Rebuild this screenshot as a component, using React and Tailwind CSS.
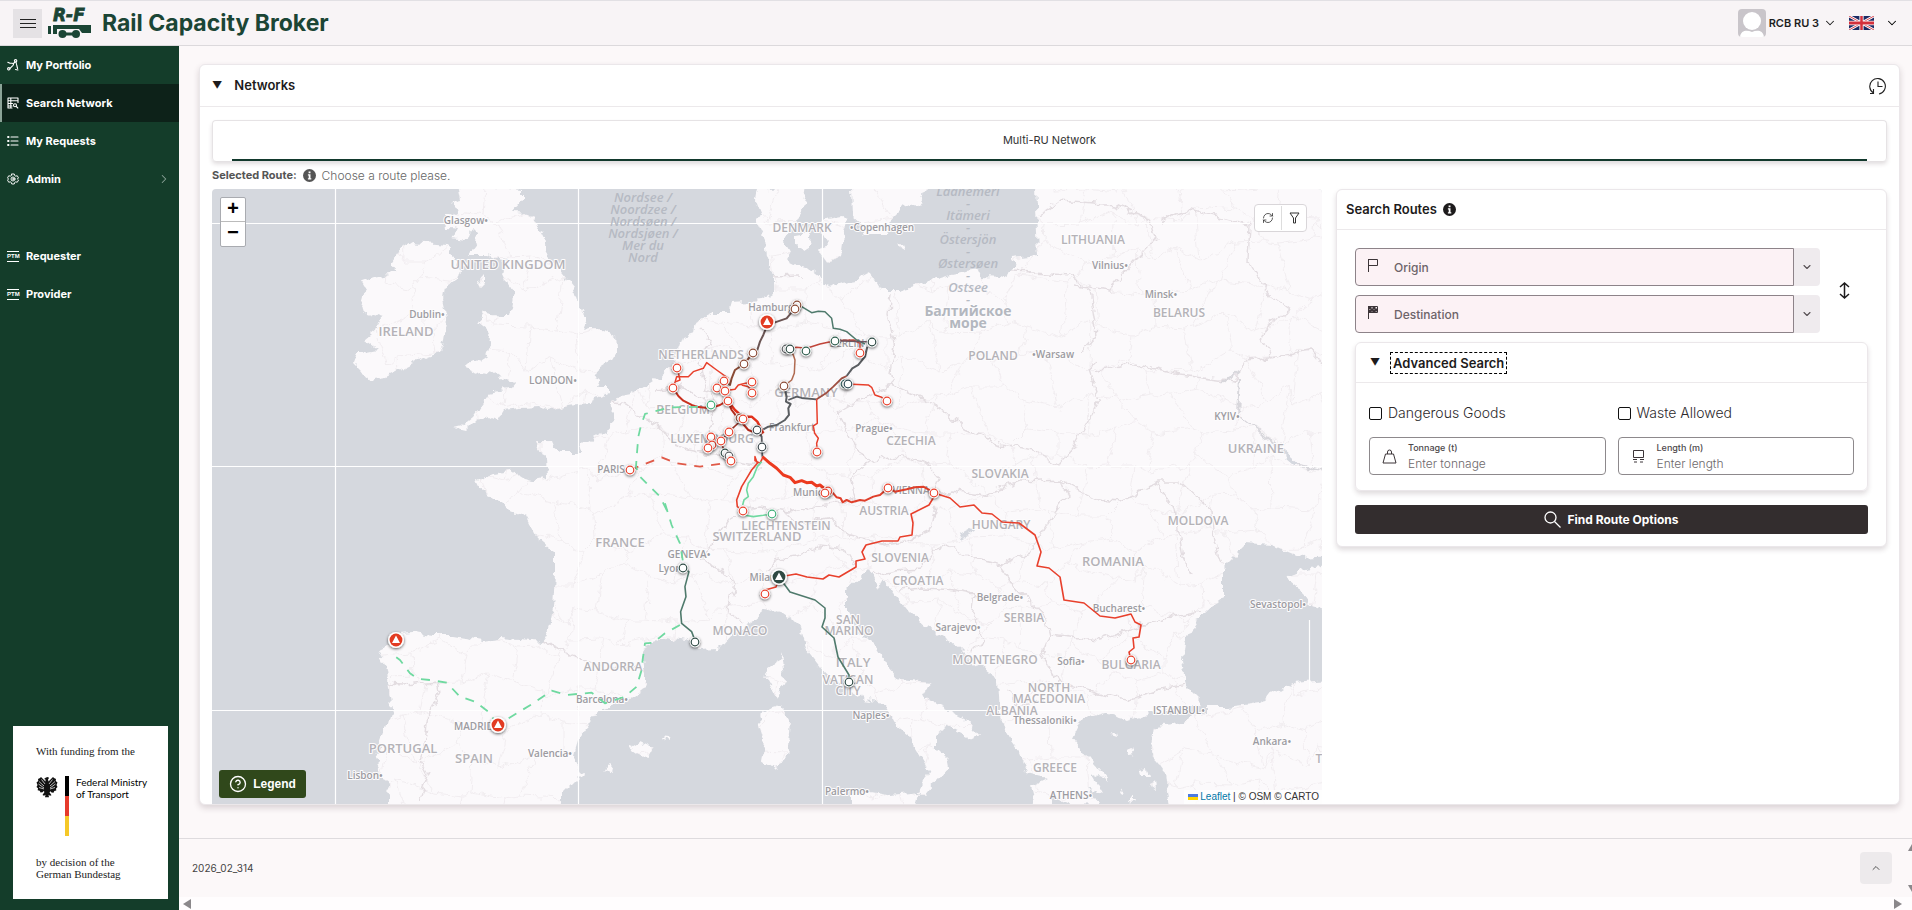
import React, { useState } from 'react';
import { ChevronDown, ChevronRight, ChevronUp, RefreshCw, CircleHelp } from 'lucide-react';

const LAND = [
  // Continental Europe
  'M757 189 755 200 760 213 757 223 765 240 767 257 773 273 773 293 763 300 733 302 730 313 712 313 697 320 695 333 683 337 675 360 660 377 653 380 630 395 620 397 613 400 612 427 587 440 580 447 582 453 560 453 552 447 550 442 538 442 547 460 548 477 533 480 523 478 510 470 493 473 477 480 483 493 500 502 507 510 527 518 537 537 555 552 555 573 553 607 548 633 543 642 520 640 500 638 483 640 453 635 433 635 413 632 397 633 392 643 378 650 385 663 388 687 392 710 387 727 375 760 383 777 390 793 390 810 562 810 562 793 582 773 573 757 578 740 590 722 600 710 625 702 645 687 645 673 642 653 648 643 667 637 687 640 700 648 720 647 733 633 753 620 767 608 783 613 797 623 805 647 817 663 825 673 843 687 864 700 884 703 896 727 909 737 921 757 929 770 925 780 917 795 925 795 937 780 949 767 947 757 937 747 937 735 949 727 974 740 980 737 966 720 941 707 921 697 929 683 900 680 888 667 876 647 856 627 847 610 847 590 868 570 878 590 884 580 892 592 909 613 925 627 958 647 974 663 998 680 1000 713 1007 737 1019 753 1027 773 1047 778 1030 786 1036 810 1050 810 1050 795 1070 805 1100 804 1088 787 1104 794 1092 773 1108 780 1088 757 1072 737 1080 720 1104 713 1129 720 1149 713 1170 710 1202 703 1186 687 1182 660 1184 643 1202 613 1223 597 1223 567 1247 543 1272 545 1304 558 1330 556 1330 185 1035 185 1038 255 1012 258 1018 266 1000 278 983 277 980 270 967 272 943 277 900 290 880 290 870 273 857 280 840 283 827 287 820 277 807 267 793 263 787 250 783 243 790 230 797 220 803 210 807 185Z',
  // Great Britain
  'M460 185 523 189 523 200 513 212 528 213 538 223 545 237 547 252 557 267 565 277 573 287 577 300 580 307 587 320 583 330 590 328 603 328 615 337 616 350 608 363 597 370 593 377 600 380 597 387 608 387 608 393 590 403 567 405 550 410 537 407 520 408 503 410 497 420 487 415 477 420 467 430 455 427 463 425 473 417 487 397 490 392 513 387 517 382 503 380 493 373 480 370 470 373 465 365 477 360 488 353 492 340 487 330 478 323 483 313 500 315 510 315 513 303 515 293 507 283 502 273 505 260 495 258 487 255 468 255 477 243 478 233 472 227 467 240 453 238 458 228 448 227 447 217 460 210 450 203 463 200Z',
  // Ireland
  'M413 242 447 245 452 255 460 270 457 280 445 288 443 300 448 323 445 340 440 353 427 357 407 367 387 377 368 380 360 370 353 363 357 353 363 353 377 350 363 340 377 328 382 318 367 313 360 308 363 297 367 290 362 282 373 278 400 273 390 262 397 252Z',
  // Zealand, Funen, Sweden, Bornholm
  'M822 220 840 217 848 220 843 237 840 257 827 263 820 253 827 243 820 230Z',
  'M797 236 808 234 812 245 804 250 797 246Z',
  'M852 185 853 217 860 223 863 235 887 235 890 220 903 207 920 203 930 185Z',
  'M897 243 905 247 904 252 899 249Z',
  // Corsica, Sardinia, Sicily
  'M782 650 785 680 776 698 766 680 768 667 780 660Z',
  'M762 713 782 707 790 720 788 747 786 763 772 768 760 760 764 740 757 717Z',
  'M849 795 864 790 890 795 921 792 916 810 849 810Z',
  // Balearics
  'M630 748 640 742 653 748 643 757Z',
  'M661 737 670 738 671 741 662 739Z',
  'M604 768 612 764 610 772Z',
  'M477 283 484 274 484 282 479 287Z',
  // Crimea
  'M1284 577 1300 570 1330 564 1330 612 1312 606 1304 593Z',
  // Turkey
  'M1207 707 1227 707 1260 703 1292 683 1330 680 1330 810 1170 810 1166 773 1149 753 1153 727 1178 723 1207 713Z',
  // Aegean islands
  'M1124 750 1132 748 1134 754 1126 755ZM1140 770 1146 768 1148 775 1141 775ZM1116 790 1121 788 1122 793ZM1128 798 1134 796 1134 801ZM1110 734 1115 732 1116 736ZM1150 785 1155 783 1156 789Z',
].join('');

const BORDERS = [
  // Iberia and France
  'M388 684 405 685 438 682 440 692 430 710 428 735 420 760 428 775 418 800',
  'M543 642 570 655 590 662 610 666 642 668',
  'M613 400 625 403 645 418 660 425 672 443 690 450 715 455 735 462 762 466',
  'M743 511 728 520 712 545 700 560 722 570 735 585 728 610 742 622',
  // Benelux and Germany
  'M700 328 712 345 700 362 705 385 715 400 712 425 704 445',
  'M653 390 680 388 705 398',
  'M773 277 800 276',
  'M890 292 888 315 895 345 890 372 893 385 865 396 838 412 852 440 868 462 850 475 855 500 820 505 790 512 760 508 745 510',
  'M893 385 925 400 945 412 965 430',
  // Alps and the Balkans
  'M786 512 800 525 830 518 850 535 885 545 905 542 930 530 935 505',
  'M868 462 900 456 925 462 940 478 934 493',
  'M768 572 775 560 800 556 820 545 845 548 855 565',
  'M872 575 895 570 920 568 935 550 948 545',
  'M948 545 975 560 1000 566 1030 552 1050 520 1068 495 1062 480 1020 482 985 495 950 490 938 495',
  'M900 590 925 588 955 590 975 594 972 615 985 640 970 655',
  'M1000 566 1018 590 1045 615 1050 635 1100 640 1150 622 1200 612',
  'M1050 635 1042 655 1058 680 1045 700 1020 705 1005 690',
  'M1058 680 1090 690 1130 700 1160 690 1185 685',
  // Poland to Ukraine
  'M965 430 1000 445 1035 450 1060 465 1072 450 1100 400 1090 370 1095 360',
  'M1080 353 1097 335 1090 290 1070 275 1010 272',
  'M1040 215 1060 200 1115 205 1150 220 1155 240 1135 260 1110 290 1075 285',
  'M1160 222 1190 210 1250 225 1248 260 1270 295 1290 310 1270 322 1262 340 1272 358 1310 350 1322 365',
  'M1095 373 1130 363 1180 375 1235 382 1245 360 1270 358',
  'M1062 480 1100 500 1120 502 1160 482 1180 482 1212 510 1215 540 1222 565',
  'M1155 482 1175 510 1183 560 1190 575',
];

// Regional boundaries: a brick mesh with wobbling vertices, clipped to the land
const buildMesh = () => {
  const wob = (i, j, k) => {
    const s = Math.sin(i * 127.1 + j * 311.7 + k * 74.7) * 43758.5453;
    return (s - Math.floor(s) - 0.5) * 26;
  };
  const at = (i, j) => `${Math.round(380 + i * 25 + wob(i, j, 1))} ${Math.round(180 + j * 36 + wob(i, j, 2))}`;
  let d = '';
  for (let j = 0; j < 18; j++) {
    for (let i = 0; i < 39; i++) {
      d += `M${at(i, j)} ${at(i + 1, j)}`;
      if ((i + j) % 2 === 0) d += `M${at(i, j)} ${at(i, j + 1)}`;
    }
  }
  return d;
};
const MESH = buildMesh();

const BIG_COUNTRIES = [
  ['UNITED KINGDOM', 508, 264], ['IRELAND', 406, 331], ['GERMANY', 806, 392], ['FRANCE', 620, 542],
  ['PORTUGAL', 403, 748], ['SPAIN', 474, 758], ['ITALY', 853, 662], ['UKRAINE', 1256, 448],
  ['SWITZERLAND', 757, 536], ['ROMANIA', 1113, 561],
];

const COUNTRIES = [
  ['NETHERLANDS', 701, 354], ['BELGIUM', 683, 409], ['LUXEMBOURG', 712, 438], ['CZECHIA', 911, 440],
  ['AUSTRIA', 884, 510], ['DENMARK', 802, 227], ['LITHUANIA', 1093, 239], ['BELARUS', 1179, 312],
  ['POLAND', 993, 355], ['SLOVAKIA', 1000, 473], ['HUNGARY', 1001, 524], ['MOLDOVA', 1198, 520],
  ['ANDORRA', 613, 666], ['MONACO', 740, 630], ['LIECHTENSTEIN', 786, 525], ['SLOVENIA', 900, 557],
  ['CROATIA', 918, 580], ['SAN', 848, 619], ['MARINO', 849, 630], ['VATICAN', 848, 679],
  ['CITY', 848, 690], ['SERBIA', 1024, 617], ['MONTENEGRO', 995, 659], ['BULGARIA', 1131, 664],
  ['NORTH', 1049, 687], ['MACEDONIA', 1049, 698], ['ALBANIA', 1012, 710], ['GREECE', 1055, 767], ['T', 1319, 758],
];

const CITIES = [
  ['Glasgow•', 466, 220], ['Dublin•', 427, 314], ['LONDON•', 553, 380], ['Frankfurt', 792, 427], ['Hamburg', 771, 307],
  ['BERLIN', 847, 343], ['Prague•', 874, 428], ['Munich', 811, 492], ['VIENNA', 911, 490], ['PARIS', 611, 469],
  ['•Copenhagen', 882, 227], ['Vilnius•', 1110, 265], ['Minsk•', 1161, 294], ['•Warsaw', 1053, 354],
  ['KYIV•', 1227, 416], ['GENEVA•', 689, 554], ['Lyon', 670, 568], ['Milan', 763, 577], ['Barcelona•', 602, 699],
  ['MADRID', 474, 726], ['Valencia•', 550, 753], ['Lisbon•', 365, 775], ['Naples•', 871, 715],
  ['Palermo•', 847, 791], ['Belgrade•', 1000, 597], ['Sarajevo•', 958, 627], ['Sofia•', 1071, 661],
  ['Bucharest•', 1119, 608], ['Sevastopol•', 1278, 604], ['Thessaloniki•', 1045, 720], ['ISTANBUL•', 1179, 710],
  ['Ankara•', 1272, 741], ['ATHENS•', 1071, 795],
];

const SEAS = [
  ['Nordsee /', 643, 197], ['Noordzee /', 643, 209], ['Nordsøen /', 643, 221], ['Nordsjøen /', 643, 233],
  ['Mer du', 643, 245], ['Nord', 643, 257], ['Läänemeri', 968, 191], ['-', 968, 203], ['Itämeri', 968, 215],
  ['-', 968, 227], ['Östersjön', 968, 239], ['-', 968, 251], ['Østersøen', 968, 263], ['-', 968, 275],
  ['Ostsee', 968, 287], ['-', 968, 299],
];
const RUSSIAN_SEA = [['Балтийское', 968, 310], ['море', 968, 322]];

const RED = '#e8402c';
const BROWN = '#8a4a35';
const DARK = '#5a5d61';
const PINE = '#4f7a6c';
const MINT = '#6fd9a0';

// Rhine, north German and Austrian lines, drawn at three units per map pixel
const NORTH_ROUTES = [
  ['M160 355 170 320 205 320 220 305 250 295 260 278 290 300 325 325', RED, 1.5],
  ['M160 355 175 378 190 392 215 405 230 410 270 415 300 405 322 392', '#c8301f', 2],
  ['M172 295 180 330 168 335', RED, 1.5],
  ['M400 248 372 282 345 300 335 325 330 345 312 335', BROWN, 2],
  ['M525 115 500 145 465 157 440 170 430 195 420 215 412 240 400 248', '#6b5554', 2],
  ['M525 108 545 110 575 128 595 124 615 125 635 145 640 175 660 178 680 185 710 210 735 222', PINE, 1.5],
  ['M508 236 530 232 560 235 600 222 645 212 700 210 720 220 720 248', '#c1453a', 1.5],
  ['M645 212 757 216', '#6a5660', 1.5],
  ['M508 236 520 255 525 270 523 310 515 330 492 348', '#b06a50', 1.5],
  ['M492 348 500 380 498 395 512 402 505 415 507 435 495 450 470 465 445 470 430 478', DARK, 2],
  ['M505 390 530 380 545 384 590 388', DARK, 1.8],
  ['M590 388 620 368 640 350 665 325 680 318', '#a04f42', 1.8],
  ['M680 318 697 295 715 285 735 260 742 230', DARK, 2],
  ['M682 342 745 345 755 352 765 375 785 382 800 392', RED, 1.5],
  ['M590 388 592 460 580 468 584 490 595 505 590 520 592 545', RED, 1.5],
  ['M323 392 345 420 367 440 395 440 412 455 430 490', '#e2321d', 2.5],
  ['M323 392 335 420 350 440 385 480 425 495', '#b32b1c', 2],
  ['M312 335 318 362 323 392M292 355 316 362 345 358 355 345 395 335M365 345 385 350 397 368', RED, 1.5],
  ['M367 448 327 485 303 513 273 500M303 513 265 533M303 513 314 550 334 572', '#9d3326', 1.5],
  ['M410 480 425 500 427 560', DARK, 1.8],
  ['M427 560 450 580 470 595 490 615 510 622 525 638 545 632 560 638 575 637 590 648 600 645 618 660', '#ec3a1f', 3],
  ['M618 668 640 670 650 682 662 685 668 697 680 690 695 697 720 690 735 692 760 680 780 675 804 654 825 665 860 658 885 652 910 650 943 668', '#df3f2b', 2],
  ['M427 565 420 580 405 572 405 560 412 580 395 600 380 625 365 650 350 690 352 710 370 723', RED, 1.6],
  ['M425 575 412 590 400 620 385 640 380 660 385 680 372 690 368 705M370 735 400 740 430 736 455 732', MINT, 1.6],
  ['M30 600 75 582 125 562 170 580 240 590 300 582 334 572', '#e05a48', 1.8, '9 8'],
  ['M285 410 150 412 75 432 62 470 55 500 50 560 48 590 60 620 80 640 120 680 150 740', MINT, 1.8, '9 8'],
];

const WEST_ROUTES = [
  ['M1395 10 1415 75 1440 130 1450 190', MINT, 1.8, '9 8'],
  ['M1450 205 1467 215 1455 260 1458 290 1442 335 1445 370 1475 395 1487 427', PINE, 1.6],
  ['M1440 375 1395 400 1360 428 1335 430 1328 480 1325 510 1310 560 1275 590 1215 610 1175 578 1100 585 1055 572 1000 610 950 640 893 675', MINT, 1.8, '9 8'],
  ['M893 675 865 635 825 605 780 590 740 548 690 540 655 537 630 520 600 480 575 462', MINT, 1.8, '9 8'],
];

const SOUTH_ROUTES = [
  ['M934 493 950 498 960 507 974 505 982 513 992 514 1002 522 1019 523 1035 535 1041 552 1037 566 1049 568 1060 577 1064 600 1084 603 1100 616 1115 618 1131 614 1135 622 1141 625 1139 637 1133 638 1134 648 1129 652 1131 660', RED, 1.6],
  ['M935 495 929 505 911 514 913 523 912 535 900 537 898 541 882 541 866 545 862 552 865 559 856 561 856 567 839 577 829 575 823 579 807 577 796 574 779 577 776 587 765 590 765 594', RED, 1.6],
  ['M779 577 790 592 815 600 825 608 825 618 822 627 834 638 838 657 849 675 849 682', PINE, 1.6],
];

const STOPS = [
  [677, 368, RED], [673, 388, RED], [711, 405, '#3fae78'], [724, 381, RED], [717, 388, RED], [725, 391, RED],
  [728, 401, RED], [752, 382, RED], [752, 393, RED], [744, 364, BROWN], [753, 353, BROWN], [797, 305, BROWN],
  [795, 309, BROWN], [786, 349, DARK], [790, 349, '#2e4a44'], [806, 351, '#2e5c4c'], [835, 341, '#2e5c4c'],
  [872, 342, '#2e4a44'], [860, 353, RED], [784, 386, BROWN], [845, 384, '#2e5c5c'], [848, 384, '#2e4a54'],
  [887, 401, RED], [817, 452, RED], [740, 418, BROWN], [743, 419, RED], [729, 432, RED], [711, 437, RED],
  [712, 445, RED], [721, 441, RED], [708, 448, RED], [725, 453, '#2e4a44'], [729, 456, DARK], [731, 461, RED],
  [757, 430, '#39444a'], [762, 447, '#39444a'], [630, 470, RED], [743, 511, RED], [772, 514, '#3fae78'],
  [828, 491, RED], [825, 493, RED], [888, 488, RED], [934, 493, RED], [765, 594, RED], [1131, 660, RED],
  [849, 682, '#2e4a44'], [683, 568, '#2e4a44'], [695, 642, '#2e4a44'],
];

const HUBS = [[767, 322, '#e23a22'], [396, 640, '#e23a22'], [498, 725, '#e23a22'], [779, 577, '#2d4a42']];

function Routes({ items, transform }) {
  return (
    <g transform={transform} fill="none" strokeLinejoin="round" strokeLinecap="butt">
      {items.map(([d, color, width, dash]) => (
        <path key={d} d={d} stroke={color} strokeWidth={width} strokeDasharray={dash} vectorEffect="non-scaling-stroke" />
      ))}
    </g>
  );
}

function Labels({ items, ...rest }) {
  return (
    <g textAnchor="middle" dominantBaseline="central" paintOrder="stroke" strokeLinejoin="round" {...rest}>
      {items.map(([text, x, y]) => <text key={text + x + y} x={x} y={y}>{text}</text>)}
    </g>
  );
}

function EuropeMap() {
  return (
    <svg viewBox="212 189 1110 616" preserveAspectRatio="xMinYMin slice" className="block h-full w-full font-['Open_Sans',sans-serif]" role="img" aria-label="Network map">
      <defs>
        <clipPath id="land"><path d={LAND} /></clipPath>
        <filter id="coast" x="0" y="0" width="100%" height="100%">
          <feTurbulence type="fractalNoise" baseFrequency="0.09" numOctaves="3" seed="4" />
          <feDisplacementMap in="SourceGraphic" scale="11" xChannelSelector="R" yChannelSelector="G" />
        </filter>
        <filter id="drop" x="-60%" y="-60%" width="220%" height="220%">
          <feDropShadow dx="0" dy="1" stdDeviation="1.8" floodColor="#000" floodOpacity="0.65" />
        </filter>
      </defs>
      <rect x="150" y="150" width="1250" height="720" fill="#d5d8de" />
      <g filter="url(#coast)">
        <path d={LAND} fill="#fbf9fb" />
        <g clipPath="url(#land)" fill="none" strokeLinejoin="round">
          <path d={MESH} stroke="#f1edf0" strokeWidth="1" />
          <path d={BORDERS.join('')} stroke="#e3dde1" strokeWidth="1.4" />
          <path d="M1222 382 1240 372M1240 376 1238 415 1260 432 1282 450 1300 465 1325 472" stroke="#d8d7dc" strokeWidth="2" />
          <path d="M960 536 975 528M1282 450 1296 462" stroke="#d5d8df" strokeWidth="4" />
        </g>
      </g>
      <path d="M335.5 180V810M578.5 180V810M822.5 180V300M822.5 640V810M1309.5 620V690M200 223.5H1250M200 466.5H1322M200 710.5H1190M200 804.5H1322" stroke="#fff" strokeWidth="1.2" fill="none" />
      <Labels items={SEAS} fill="#b6bac3" fontSize="13" fontWeight="600" fontStyle="italic" />
      <Labels items={RUSSIAN_SEA} fill="#b3b7bf" fontSize="14" fontWeight="700" stroke="#fdfcfd" strokeWidth="2" />
      <Labels items={BIG_COUNTRIES} fill="#b4b2b7" fontSize="13" fontWeight="600" stroke="#fdfcfd" strokeWidth="2" />
      <Labels items={COUNTRIES} fill="#b4b2b7" fontSize="12" fontWeight="600" stroke="#fdfcfd" strokeWidth="2" />
      <Labels items={CITIES} fill="#9c9ba1" fontSize="10" fontWeight="600" stroke="#fdfcfd" strokeWidth="2" />
      <Routes items={NORTH_ROUTES} transform="translate(620 270) scale(0.3333)" />
      <Routes items={WEST_ROUTES} transform="translate(200 500) scale(0.3333)" />
      <Routes items={SOUTH_ROUTES} />
      {STOPS.map(([x, y, color]) => (
        <g key={`${x}-${y}`} filter="url(#drop)">
          <circle cx={x} cy={y} r="5.2" fill="#fff" />
          <circle cx={x} cy={y} r="3.8" fill="#fff" stroke={color} strokeWidth="1.2" />
        </g>
      ))}
      {HUBS.map(([x, y, color]) => (
        <g key={`${x}-${y}`} filter="url(#drop)">
          <circle cx={x} cy={y} r="8" fill="#fff" />
          <circle cx={x} cy={y} r="6.4" fill={color} />
          <path d={`M${x} ${y - 4.5} ${x + 4} ${y + 3} ${x - 4} ${y + 3}Z`} fill="#fff" />
        </g>
      ))}
    </svg>
  );
}

function RailLogo() {
  return (
    <svg width="44" height="32" viewBox="0 0 44 32" fill="#1b4535" className="overflow-visible" aria-hidden="true">
      <text x="5" y="14" fontFamily="DejaVu Sans" fontSize="17" fontWeight="700" fontStyle="italic" stroke="#1b4535" strokeWidth=".8">R-F</text>
      <path d="M0 19h3v8H0zM5 18h38v8h-9l-3-4H9v5H5z" />
      <circle cx="14.5" cy="27" r="4" /><circle cx="28" cy="27" r="4" />
      <path d="M14 25.5h14v3H14z" />
    </svg>
  );
}

const stroke = { fill: 'none', stroke: 'currentColor', strokeWidth: 1.1, strokeLinejoin: 'round', strokeLinecap: 'round' };

const PortfolioIcon = () => (
  <svg width="12" height="12" viewBox="0 0 12 12" {...stroke}>
    <circle cx="1.8" cy="9.8" r="1.2" /><circle cx="8.600" cy="1.800" r="1.200" />
    <path d="M.8 3.200 3 4.300h2c1.500 0 2 .8 1 2L3 9.300M9 3l.8 3.500.8 3M6.500 4.500 8 3M8.500 10.500l2.500.5" />
  </svg>
);
const SearchTableIcon = () => (
  <svg width="12" height="12" viewBox="0 0 12 12" {...stroke}>
    <path d="M1 1h10v4.500M1 1v10h4M1 3.800h10M1 6.500h4.500M1 9h4M3.800 1v10" /><circle cx="8" cy="8.200" r="1.500" /><path d="m9.200 9.400 1.600 1.600" />
  </svg>
);
const ListIcon = () => (
  <svg width="12" height="12" viewBox="0 0 12 12" {...stroke}>
    <path d="M4 2h7M4 6h7M4 10h7" /><path d="M1 2h.6M1 6h.6M1 10h.6" strokeWidth="1.8" />
  </svg>
);
const GearIcon = () => (
  <svg width="12" height="12" viewBox="0 0 24 24" {...stroke} strokeWidth="1.9">
    <path d="M9.500 2h5l.8 3 2.200 1.300 3-.8 2.500 4.300-2.200 2.200 2.200 2.200-2.500 4.300-3-.8-2.200 1.300-.8 3h-5l-.8-3-2.200-1.300-3 .8L1 14.200 3.200 12 1 9.800l2.500-4.300 3 .8L8.700 5z" /><circle cx="12" cy="12" r="4" /><circle cx="12" cy="12" r="1" />
  </svg>
);
const PtmIcon = () => (
  <span className="block w-3 border-y border-current py-px text-center font-['Liberation_Sans',sans-serif] text-[6px] leading-[7px] font-bold">PTM</span>
);

const InfoDot = () => (
  <svg width="13" height="13" viewBox="0 0 13 13" fill="currentColor" aria-hidden="true">
    <circle cx="6.5" cy="6.5" r="6.5" />
    <path d="M5.600 2.500h1.900v1.800H5.600zM4.900 5.300h2.600v4h.8v1.100H4.900V9.300h.8V6.400h-.8z" fill="#fff" />
  </svg>
);

const NAV = [
  { label: 'My Portfolio', icon: PortfolioIcon },
  { label: 'Search Network', icon: SearchTableIcon, active: true },
  { label: 'My Requests', icon: ListIcon },
  { label: 'Admin', icon: GearIcon, expandable: true },
];
const ROLES = [
  { label: 'Requester', icon: PtmIcon },
  { label: 'Provider', icon: PtmIcon },
];

function NavItem({ label, icon: Icon, active, expandable }) {
  return (
    <a href="#" className={`flex h-[38px] items-center gap-[7px] pr-2 text-[11px] font-bold text-white ${active ? 'border-l-2 border-[#8ba397] bg-[#0d2219] pl-[5px]' : 'pl-[7px]'}`}>
      <Icon />
      <span className="flex-1">{label}</span>
      {expandable && <ChevronRight size={14} strokeWidth={1.8} className="text-[#8ba397]" />}
    </a>
  );
}

function FundingBox() {
  return (
    <div className="mt-auto mr-[11px] mb-[11px] ml-[13px] h-[173px] bg-white pl-[23px] text-[#222]">
      <p className="pt-[17px] font-['Liberation_Serif',serif] text-[11px] leading-4 font-medium">With funding from the</p>
      <div className="mt-[17px] flex font-['Lato',sans-serif] text-[10px] leading-3 text-black">
        <svg width="22" height="22" viewBox="0 0 22 22" fill="#111" aria-hidden="true">
          <path d="M10 1.500 12 1l1 1-1 1.500.5 2L15 3l2-2 1 1 2 1-.3 2 1.800 1.500L20.500 9l1 2-1.500 1.500.3 2-2 .5-.8 1.800-2-.3-1-1.200-1 1 2 3-1.500.5-1.500-1 .5 2.500h-4l.5-2.500-1.500 1L6.500 19l2-3-1-1-1 1.200-2 .3-.8-1.800-2-.5.3-2L.5 11l1-2-1-2.500L2.300 5 2 3l2-1 1-1 2 2 2.500 2.500V3.500L8 3z" />
          <path d="M3 5.500 8 10M2.500 8 8 12M3 11.500l5 1.500M19 5.500 14 10m5.500-2L14 12m5-.5-5 1.500M5.500 3.500 9 8m7.500-4.500L13 8" stroke="#fff" strokeWidth=".7" />
        </svg>
        <span className="ml-[7px] w-1">
          <span className="block h-5 bg-black" /><span className="block h-5 bg-[#e63b2c]" /><span className="block h-5 bg-[#f5c828]" />
        </span>
        <span className="ml-[7px]">Federal Ministry<br />of Transport</span>
      </div>
      <p className="mt-5 font-['Liberation_Serif',serif] text-[11px] leading-3 font-medium">by decision of the<br />German Bundestag</p>
    </div>
  );
}

function Header() {
  return (
    <header className="flex h-[46px] items-center border-t border-b border-t-[#e2e0e4] border-b-[#dcd9dc] bg-[#f8f4f6] px-[13px]">
      <button type="button" aria-label="Toggle menu" className="flex h-[29px] w-[29px] items-center justify-center bg-[#e5e2e5]">
        <svg width="16" height="11" viewBox="0 0 16 11" stroke="#222"><path d="M0 1.500h16M0 5.500h16M0 9.500h16" /></svg>
      </button>
      <a href="#" className="ml-1.5 flex items-center gap-2.5 text-[#1b4535]">
        <RailLogo />
        <span className="text-[23px] leading-7 font-bold">Rail Capacity Broker</span>
      </a>
      <button type="button" className="ml-auto flex items-center text-[11px] font-semibold text-[#1e1e1e]">
        <svg width="28" height="28" viewBox="0 0 28 28" className="mr-[3px] rounded-sm bg-[#c9c5ca]"><circle cx="14" cy="12" r="9" fill="#fff" /><path d="M2 28c1-7 7-7 12-5 5-2 11-2 12 5z" fill="#fff" /></svg>
        RCB RU 3
        <ChevronDown size={14} strokeWidth={1.8} className="ml-1" />
      </button>
      <button type="button" aria-label="Language" className="ml-3 flex items-center">
        <svg width="25" height="14" viewBox="0 0 60 30" preserveAspectRatio="none">
          <path d="M0 0h60v30H0z" fill="#1c2a63" />
          <path d="m0 0 60 30M60 0 0 30" stroke="#fff" strokeWidth="6" />
          <path d="m0 0 60 30M60 0 0 30" stroke="#d4303c" strokeWidth="2" />
          <path d="M30 0v30M0 15h60" stroke="#fff" strokeWidth="10" />
          <path d="M30 0v30M0 15h60" stroke="#d4303c" strokeWidth="6" />
        </svg>
        <ChevronDown size={14} strokeWidth={1.8} className="ml-[11px]" />
      </button>
    </header>
  );
}

const FlagIcon = ({ checkered }) => (
  <svg width="12" height="14" viewBox="0 0 12 14" className="absolute top-[10px] left-[12px] text-[#3c3538]" fill="none" stroke="currentColor" aria-hidden="true">
    <path d="M1.500 1v13M1.500 1.500h9v6h-9" />
    {checkered && <path d="M2 2h2v2H2zM6 2h2v2H6zM4 4h2v2H4zM8 4h2v2H8zM2 5.500h2v2H2zM6 5.500h2v2H6z" fill="currentColor" />}
  </svg>
);

function StationField({ label, checkered }) {
  return (
    <div className="flex h-[38px]">
      <div className="relative flex-1">
        <FlagIcon checkered={checkered} />
        <input type="text" aria-label={label} placeholder={label} className="h-full w-full rounded-l border border-[#8d8389] bg-[#fcf2f5] pl-[38px] text-[12px] font-medium placeholder:text-[#6d6469] focus:outline-none" />
      </div>
      <button type="button" aria-label={`Show ${label} list`} className="flex w-[26px] items-center justify-center rounded-r bg-[#efebee] text-[#554e52]">
        <ChevronDown size={12} strokeWidth={2.2} />
      </button>
    </div>
  );
}

function Tick({ label }) {
  return (
    <label className="flex items-center gap-1.5 text-[14px] leading-5 font-light text-[#2d2a2c]">
      <input type="checkbox" className="h-[13px] w-[13px] appearance-none rounded-[2px] border border-[#111] checked:bg-[#143d2a]" />
      {label}
    </label>
  );
}

function MeasureField({ id, label, placeholder, children }) {
  return (
    <div className="flex h-[38px] items-center rounded border border-[#8d898c] pl-3">
      <svg width="15" height="15" viewBox="0 0 15 15" className="text-[#3c3538]" fill="none" stroke="currentColor" aria-hidden="true">{children}</svg>
      <div className="ml-[11px] min-w-0 flex-1">
        <label htmlFor={id} className="block text-[9px] leading-4 font-medium text-[#4d484b]">{label}</label>
        <input id={id} type="text" placeholder={placeholder} className="block h-4 w-full text-[12px] leading-4 font-light placeholder:text-[#6d686b] focus:outline-none" />
      </div>
    </div>
  );
}

function SearchPanel() {
  return (
    <section className="self-start rounded-md border border-[#ebe7ea] bg-white shadow-[0_3px_5px_rgba(60,40,50,0.16)]">
      <h2 className="flex h-10 items-center gap-1.5 border-b border-[#ece9eb] px-[9px] text-[13px] font-semibold text-[#1d1b1c]">
        Search Routes <InfoDot />
      </h2>
      <form className="px-[18px] pt-[18px] pb-3" onSubmit={e => e.preventDefault()}>
        <div className="flex items-center">
          <div className="flex flex-1 flex-col gap-[9px]">
            <StationField label="Origin" />
            <StationField label="Destination" checkered />
          </div>
          <button type="button" aria-label="Swap origin and destination" className="flex w-12 justify-center">
            <svg width="11" height="17" viewBox="0 0 11 17" fill="none" stroke="#1d1b1c" strokeWidth="1.5"><path d="M5.500 1v15M1 5l4.500-4L10 5M1 12l4.500 4 4.500-4" /></svg>
          </button>
        </div>

        <div className="mt-[9px] rounded-md border border-[#ebe7ea] shadow-[0_3px_5px_rgba(60,40,50,0.16)]">
          <div className="flex h-10 items-center gap-2.5 border-b border-[#ece9eb] px-3.5 text-[#1d1b1c]">
            <span className="text-[10px]">▼</span>
            <button type="button" className="border border-dashed border-black px-0.5 text-[13px] leading-5 font-semibold">Advanced Search</button>
          </div>
          <div className="grid grid-cols-2 gap-x-3 gap-y-3.5 px-[13px] pt-5 pb-[15px]">
            <Tick label="Dangerous Goods" />
            <Tick label="Waste Allowed" />
            <MeasureField id="tonnage" label="Tonnage (t)" placeholder="Enter tonnage">
              <path d="M3.500 5h8l2.500 9H1zM5.500 5V3a2 2 0 0 1 4 0v2" />
            </MeasureField>
            <MeasureField id="length" label="Length (m)" placeholder="Enter length">
              <path d="M2.500 1.500h10v7h-10zM2 10.500h4M9 10.500h4M3 13h3M9 13h3" />
            </MeasureField>
          </div>
        </div>

        <button type="submit" className="mt-3.5 flex h-[29px] w-full items-center justify-center gap-1.5 rounded-[3px] bg-[#332d2e] text-[12px] font-bold text-white">
          <svg width="17" height="17" viewBox="0 0 17 17" fill="none" stroke="currentColor" strokeWidth="1.3"><circle cx="6.5" cy="6.5" r="5.5" /><path d="m10.500 10.500 6 6" /></svg>
          Find Route Options
        </button>
      </form>
    </section>
  );
}

function MapPanel() {
  return (
    <div className="relative h-[615px] overflow-hidden rounded-t">
      <EuropeMap />
      <div className="absolute top-2 left-2 flex w-[26px] flex-col rounded-xs border border-[#a9abb0] bg-white font-['Liberation_Mono',monospace] text-[20px] leading-6 font-bold text-black">
        <button type="button" aria-label="Zoom in" className="h-6 border-b border-[#bbb]">+</button>
        <button type="button" aria-label="Zoom out" className="h-6">−</button>
      </div>
      <div className="absolute top-[15px] right-[15px] flex h-7 items-center rounded border border-[#d9d6d9] bg-white text-[#333]">
        <button type="button" aria-label="Refresh" className="flex w-[26px] justify-center"><RefreshCw size={12} strokeWidth={1.6} /></button>
        <button type="button" aria-label="Filter" className="flex h-6 w-[25px] items-center justify-center border-l border-[#ddd]">
          <svg width="11" height="12" viewBox="0 0 11 12" fill="none" stroke="currentColor"><path d="M1 1h9L6.500 6v5h-2V6z" /></svg>
        </button>
      </div>
      <button type="button" className="absolute bottom-1.5 left-[7px] flex h-7 w-[87px] items-center justify-center gap-1.5 rounded-[3px] bg-[#30481b] font-['Liberation_Sans',sans-serif] text-[12px] font-bold text-white">
        <CircleHelp size={18} strokeWidth={1.8} /> Legend
      </button>
      <p className="absolute right-0 bottom-0 flex items-center gap-0.5 bg-white/80 pr-[3px] pl-1 font-['Liberation_Sans',sans-serif] text-[10px] leading-[14px] text-[#333]">
        <span className="h-1.5 w-2.5 border-b-3 border-[#ffd500] bg-[#4c7be1]" />
        <span><a href="#" className="text-[#0078a8]">Leaflet</a> | © OSM © CARTO</span>
      </p>
    </div>
  );
}

export default function App() {
  const [open, setOpen] = useState(true);

  return (
    <div className="flex min-h-screen flex-col bg-[#fcf8f9] font-['Inter',sans-serif]">
      <Header />
      <div className="flex flex-1">

        {/* Sidebar */}
        <aside className="flex w-[179px] shrink-0 flex-col bg-[#143d2a]">
          <nav>{NAV.map(item => <NavItem key={item.label} {...item} />)}</nav>
          <nav className="mt-[39px]">{ROLES.map(item => <NavItem key={item.label} {...item} />)}</nav>
          <FundingBox />
        </aside>

        <div className="flex min-w-0 flex-1 flex-col">
          <main className="pt-[18px] pr-3 pb-7 pl-5">
            <section className="rounded-md border border-[#ebe7ea] bg-white shadow-[0_3px_6px_rgba(60,40,50,0.18)]">
              <div className="flex h-[42px] items-center border-b border-[#ece9eb] px-3 text-[#1d1b1c]">
                <button type="button" onClick={() => setOpen(!open)} className="flex items-center gap-3 text-[13px] font-semibold">
                  <span className="text-[10px]">{open ? '▼' : '►'}</span> Networks
                </button>
                <button type="button" aria-label="History" className="ml-auto">
                  <svg width="18" height="18" viewBox="0 0 18 18" fill="none" stroke="#222" strokeWidth="1.1">
                    <path d="M4.500 16A7.800 7.800 0 1 1 10 17M4.500 12v4.500H1" /><path d="M9 4.500V9.500h4.500" />
                  </svg>
                </button>
              </div>

              {open && (
                <div className="px-3 pt-[13px]">
                  <div className="rounded-sm border border-b-0 border-[#e6e3e5] px-[19px] shadow-[0_3px_4px_rgba(60,40,50,0.16)]">
                    <button type="button" className="block h-10 w-full border-b-2 border-[#12392d] text-[11px] text-[#333]">Multi-RU Network</button>
                  </div>
                  <p className="flex h-7 items-center gap-1.5 pt-px text-[12px] text-[#666]">
                    <strong className="text-[11px] font-bold text-[#555]">Selected Route:</strong>
                    <span className="text-[#555]"><InfoDot /></span>
                    <span className="font-light">Choose a route please.</span>
                  </p>
                  <div className="grid grid-cols-[1110fr_551fr] gap-3.5">
                    <MapPanel />
                    <SearchPanel />
                  </div>
                </div>
              )}
            </section>
          </main>

          <footer className="mt-auto">
            <div className="flex h-[59px] items-center border-t border-[#dedbde] pl-[13px] text-[#8b888b]">
              <span className="text-[10px] text-[#444]">2026_02_314</span>
              <button type="button" aria-label="Back to top" className="ml-auto flex h-8 w-8 items-center justify-center rounded bg-[#edeaec] text-[#555]">
                <ChevronUp size={12} strokeWidth={2} />
              </button>
              <div className="ml-4 flex h-12 w-1 flex-col justify-between overflow-hidden" aria-hidden="true">
                <svg width="4" height="7" viewBox="0 0 4 7" fill="currentColor"><path d="M4 0v7H0z" /></svg>
                <svg width="4" height="7" viewBox="0 0 4 7" fill="currentColor"><path d="M0 0h4v7z" /></svg>
              </div>
            </div>
            <div className="flex h-[13px] items-center justify-between bg-[#fffdfe] pr-2.5 pl-1 text-[#8b888b]" aria-hidden="true">
              <svg width="8" height="10" viewBox="0 0 8 10" fill="currentColor"><path d="M8 0v10L0 5z" /></svg>
              <svg width="8" height="10" viewBox="0 0 8 10" fill="currentColor"><path d="M0 0v10l8-5z" /></svg>
            </div>
          </footer>
        </div>
      </div>
    </div>
  );
}
